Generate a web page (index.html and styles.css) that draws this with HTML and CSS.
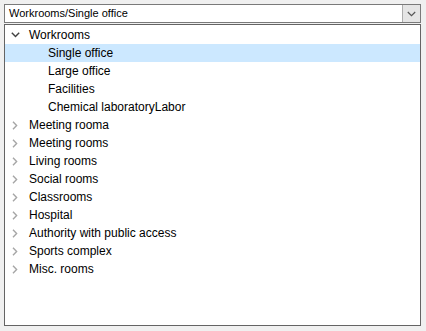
FILE: index.html
```html
<!DOCTYPE html>
<html>
<head>
<meta charset="utf-8">
<link rel="stylesheet" href="styles.css">
</head>
<body>
<div class="panel">
  <div class="combo">
    <span class="combo-text">Workrooms/Single office</span>
    <span class="combo-btn">
      <svg width="9" height="6" viewBox="0 0 9 6"><polyline points="0.8,1 4.5,4.6 8.2,1" fill="none" stroke="#555" stroke-width="1.2"/></svg>
    </span>
  </div>
  <div class="tree">
    <div class="row">
      <span class="toggle"><svg width="9" height="6" viewBox="0 0 9 6"><polyline points="0.8,0.8 4.5,4.6 8.2,0.8" fill="none" stroke="#404040" stroke-width="1.4"/></svg></span>
      <span class="label">Workrooms</span>
    </div>
    <div class="row child selected"><span class="toggle"></span><span class="label">Single office</span></div>
    <div class="row child"><span class="toggle"></span><span class="label">Large office</span></div>
    <div class="row child"><span class="toggle"></span><span class="label">Facilities</span></div>
    <div class="row child"><span class="toggle"></span><span class="label">Chemical laboratoryLabor</span></div>
    <div class="row"><span class="toggle"><svg class="right" width="6" height="9" viewBox="0 0 6 9"><polyline points="1,0.8 4.6,4.5 1,8.2" fill="none" stroke="#a6a6a6" stroke-width="1.4"/></svg></span><span class="label">Meeting rooma</span></div>
    <div class="row"><span class="toggle"><svg class="right" width="6" height="9" viewBox="0 0 6 9"><polyline points="1,0.8 4.6,4.5 1,8.2" fill="none" stroke="#a6a6a6" stroke-width="1.4"/></svg></span><span class="label">Meeting rooms</span></div>
    <div class="row"><span class="toggle"><svg class="right" width="6" height="9" viewBox="0 0 6 9"><polyline points="1,0.8 4.6,4.5 1,8.2" fill="none" stroke="#a6a6a6" stroke-width="1.4"/></svg></span><span class="label">Living rooms</span></div>
    <div class="row"><span class="toggle"><svg class="right" width="6" height="9" viewBox="0 0 6 9"><polyline points="1,0.8 4.6,4.5 1,8.2" fill="none" stroke="#a6a6a6" stroke-width="1.4"/></svg></span><span class="label">Social rooms</span></div>
    <div class="row"><span class="toggle"><svg class="right" width="6" height="9" viewBox="0 0 6 9"><polyline points="1,0.8 4.6,4.5 1,8.2" fill="none" stroke="#a6a6a6" stroke-width="1.4"/></svg></span><span class="label">Classrooms</span></div>
    <div class="row"><span class="toggle"><svg class="right" width="6" height="9" viewBox="0 0 6 9"><polyline points="1,0.8 4.6,4.5 1,8.2" fill="none" stroke="#a6a6a6" stroke-width="1.4"/></svg></span><span class="label">Hospital</span></div>
    <div class="row"><span class="toggle"><svg class="right" width="6" height="9" viewBox="0 0 6 9"><polyline points="1,0.8 4.6,4.5 1,8.2" fill="none" stroke="#a6a6a6" stroke-width="1.4"/></svg></span><span class="label">Authority with public access</span></div>
    <div class="row"><span class="toggle"><svg class="right" width="6" height="9" viewBox="0 0 6 9"><polyline points="1,0.8 4.6,4.5 1,8.2" fill="none" stroke="#a6a6a6" stroke-width="1.4"/></svg></span><span class="label">Sports complex</span></div>
    <div class="row"><span class="toggle"><svg class="right" width="6" height="9" viewBox="0 0 6 9"><polyline points="1,0.8 4.6,4.5 1,8.2" fill="none" stroke="#a6a6a6" stroke-width="1.4"/></svg></span><span class="label">Misc. rooms</span></div>
  </div>
</div>
</body>
</html>
```
FILE: styles.css
```css
html, body {
  margin: 0;
  padding: 0;
  background: #f0f0f0;
}
body {
  font-family: "Liberation Sans", Arial, sans-serif;
  font-size: 12px;
  color: #000;
}
.panel {
  padding: 4px 5px 0 4px;
  display: flex;
  flex-direction: column;
  gap: 1px;
}
.combo {
  box-sizing: border-box;
  width: 417px;
  height: 19px;
  border: 1px solid #7a7a7a;
  background: #fff;
  display: flex;
  align-items: center;
  justify-content: space-between;
}
.combo-text {
  padding-left: 4px;
  font-size: 11px;
  line-height: 17px;
}
.combo-btn {
  box-sizing: border-box;
  width: 18px;
  height: 17px;
  background: #e5e5e5;
  border-left: 1px solid #adadad;
  display: flex;
  align-items: center;
  justify-content: center;
}
.tree {
  box-sizing: border-box;
  width: 417px;
  height: 302px;
  border: 1px solid #646464;
  background: #fff;
  padding-top: 1px;
}
.row {
  height: 18px;
  display: flex;
  align-items: center;
}
.row.selected {
  background: #cce8ff;
}
.toggle {
  width: 24px;
  height: 18px;
  box-sizing: border-box;
  padding-left: 6px;
  display: flex;
  align-items: center;
  flex-shrink: 0;
}
.toggle .right {
  margin-left: 1px;
}
.row.child {
  padding-left: 19px;
}
.label {
  line-height: 18px;
  white-space: nowrap;
}
```
